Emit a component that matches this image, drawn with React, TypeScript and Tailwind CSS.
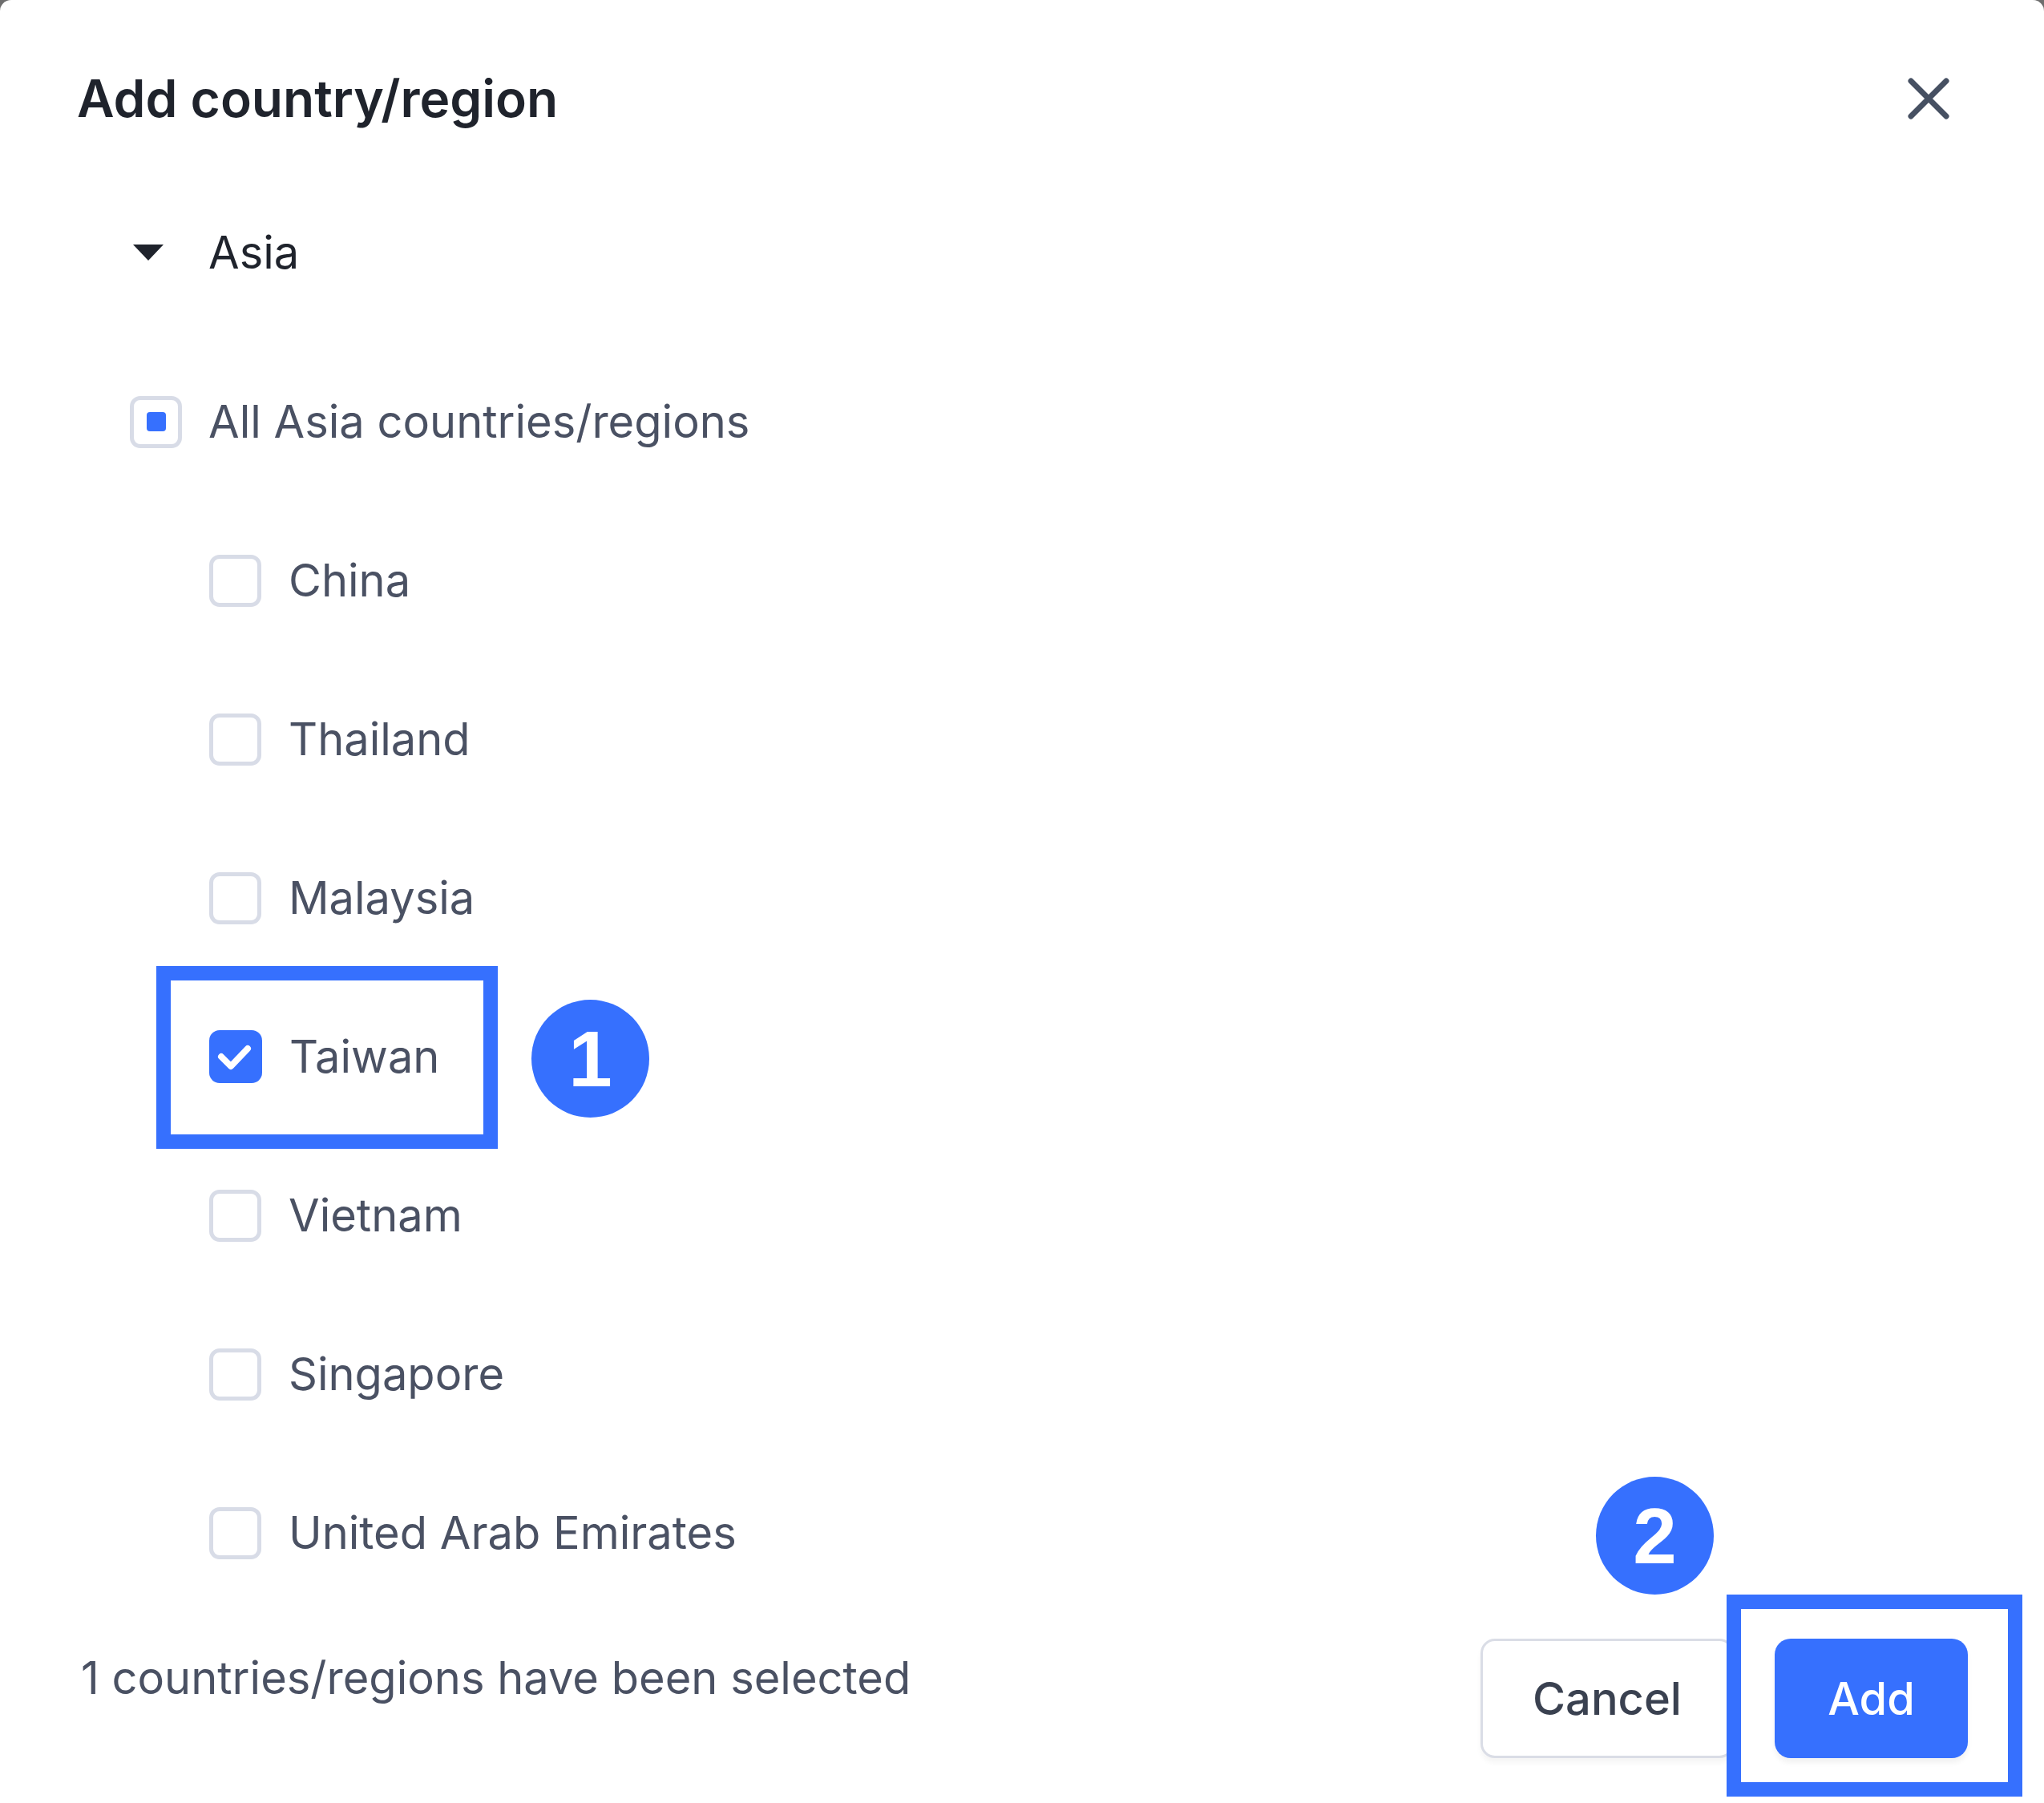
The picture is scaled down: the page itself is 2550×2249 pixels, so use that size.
import React from "react";

const FONT = { fontFamily: "Inter, 'Noto Sans', sans-serif" };

function Box({ state }: { state: "empty" | "partial" | "checked" }) {
  if (state === "checked") {
    return (
      <div className="flex h-[66px] w-[66px] shrink-0 items-center justify-center rounded-[13px] bg-[#3670fe]">
        <svg width="66" height="66" viewBox="0 0 66 66" fill="none">
          <path d="M15 33 L27 45 L48 23" stroke="white" strokeWidth="8" strokeLinecap="round" strokeLinejoin="round" />
        </svg>
      </div>
    );
  }
  return (
    <div className="flex h-[65px] w-[65px] shrink-0 items-center justify-center rounded-[13px] border-[5px] border-[#d8dce7] bg-white">
      {state === "partial" && <div className="h-[24px] w-[24px] rounded-[4px] bg-[#3670fe]" />}
    </div>
  );
}

function Marker({ n, className }: { n: string; className: string }) {
  return (
    <div
      className={`absolute flex h-[147px] w-[147px] items-center justify-center rounded-full bg-[#3670fe] text-[98px] font-bold leading-none text-white ${className}`}
      style={{ fontFamily: "'Liberation Sans', Arial, sans-serif" }}
    >
      {n}
    </div>
  );
}

const countries = ["China", "Thailand", "Malaysia", "Taiwan", "Vietnam", "Singapore", "United Arab Emirates"];

export default function App() {
  return (
    <div className="h-[2249px] w-[2550px] overflow-hidden bg-[#6e6e6e]" style={FONT}>
      <div className="flex h-full w-full flex-col rounded-t-[14px] bg-white pl-[96px] pr-[95px]">
        {/* header */}
        <div className="flex h-[246px] shrink-0 items-center justify-between">
          <h1 className="text-[64px] font-semibold text-[#1f232c]">Add country/region</h1>
          <button className="mr-[23px] flex h-[52px] w-[52px] items-center justify-center">
            <svg width="52" height="52" viewBox="0 0 52 52" fill="none">
              <path d="M4 4 L48 48 M48 4 L4 48" stroke="#465062" strokeWidth="7" strokeLinecap="round" />
            </svg>
          </button>
        </div>

        {/* continent group */}
        <div className="flex h-[138px] shrink-0 items-center pl-[70px]">
          <svg width="38" height="20" viewBox="0 0 38 20" className="shrink-0">
            <path d="M0 0 H38 L19 20 Z" fill="#1f232c" />
          </svg>
          <span className="ml-[56px] text-[56px] text-[#1f232c]">Asia</span>
        </div>

        <div className="mt-[43px] flex flex-col">
          <div className="flex h-[198px] items-center pl-[66px]">
            <Box state="partial" />
            <span className="ml-[33px] text-[56px] text-[#4a5163]">All Asia countries/regions</span>
          </div>
          {countries.map((c) => (
            <div key={c} className="flex h-[198px] items-center pl-[165px]">
              <div className="relative flex h-[66px] items-center">
                <Box state={c === "Taiwan" ? "checked" : "empty"} />
                <span className="ml-[34px] text-[56px] text-[#4a5163]">{c}</span>
                {c === "Taiwan" && (
                  <>
                    <div className="absolute left-[-66px] top-[-80px] h-[228px] w-[426px] border-[18px] border-[#3670fe]" />
                    <Marker n="1" className="left-[402px] top-[-38px]" />
                  </>
                )}
              </div>
            </div>
          ))}
        </div>

        {/* footer */}
        <div className="flex items-start justify-between pt-[33px]">
          <p className="mt-[15px] pl-[5px] text-[56px] leading-[68px] text-[#4a5163]">1 countries/regions have been selected</p>
          <div className="flex items-center gap-[51px]">
            <button className="h-[149px] w-[316px] rounded-[18px] border-[3px] border-[#dadde6] bg-white text-[56px] font-medium text-[#3a4150] shadow-[0_6px_6px_rgba(0,0,0,0.04)]">
              Cancel
            </button>
            <div className="relative">
              <button className="h-[149px] w-[241px] rounded-[20px] bg-[#3670fe] text-[56px] font-medium text-white shadow-[0_6px_6px_rgba(0,0,0,0.05)]">
                Add
              </button>
              <div className="absolute left-[-60px] top-[-55px] h-[252px] w-[369px] border-[18px] border-[#3670fe]" />
              <Marker n="2" className="left-[-223px] top-[-202px]" />
            </div>
          </div>
        </div>
      </div>
    </div>
  );
}
